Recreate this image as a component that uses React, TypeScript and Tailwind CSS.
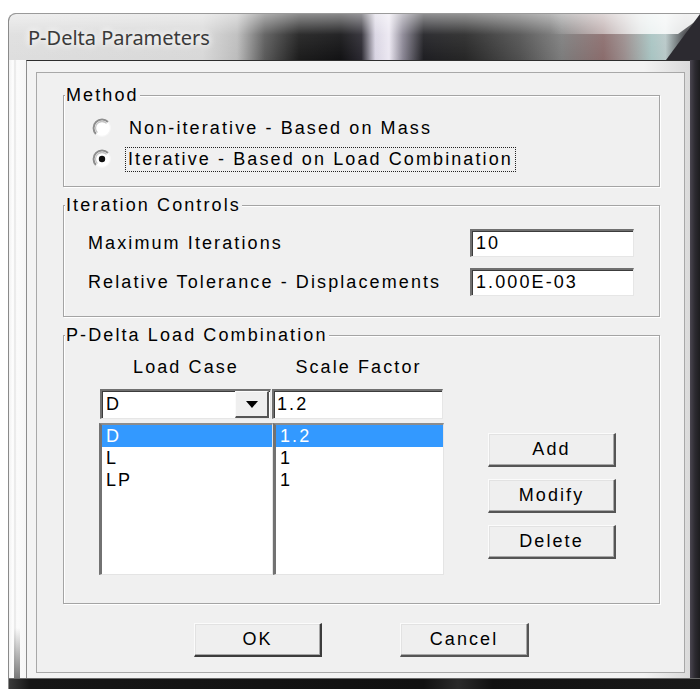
import React from "react";

const ui = "font-['Liberation_Sans',Arial,sans-serif] text-[18px] tracking-[2.1px] text-black";

function Radio({ checked }: { checked?: boolean }) {
  return (
    <svg width="20" height="20" viewBox="0 0 20 20" className="shrink-0">
      <circle cx="10" cy="10" r="8.5" fill="#ffffff" />
      <path d="M3.99 16.01 A8.5 8.5 0 0 1 16.01 3.99" fill="none" stroke="#8e8e8e" strokeWidth="2" />
      <path d="M5.4 14.6 A6.5 6.5 0 0 1 14.6 5.4" fill="none" stroke="#c4c4c4" strokeWidth="1.3" />
      <path d="M16.01 3.99 A8.5 8.5 0 0 1 3.99 16.01" fill="none" stroke="#f6f6f6" strokeWidth="1.2" />
      {checked && <circle cx="10" cy="10" r="3.2" fill="#111111" />}
    </svg>
  );
}

function Field({ value, width }: { value: string; width: string }) {
  return (
    <div
      className={`${width} h-[28px] bg-white border-t-2 border-l-2 border-b border-r border-t-[#707070] border-l-[#707070] border-b-[#e6e6e6] border-r-[#e6e6e6] shadow-[inset_1px_1px_0_#3c3c3c] flex items-center pl-[4px]`}
    >
      {value}
    </div>
  );
}

function Button({ label, width, strong }: { label: string; width: string; strong?: boolean }) {
  return (
    <div
      className={`${width} h-[34px] bg-[#efefef] border-t border-l border-t-[#fbfbfb] border-l-[#fbfbfb] border-b-2 border-r-2 ${
        strong ? "border-b-[#3c3c3c] border-r-[#3c3c3c]" : "border-b-[#555555] border-r-[#555555]"
      } shadow-[inset_-1px_-1px_0_#a8a8a8,inset_1px_1px_0_#e2e2e2] flex items-center justify-center`}
    >
      {label}
    </div>
  );
}

function GroupBox({
  title,
  className,
  children,
}: {
  title: string;
  className: string;
  children: React.ReactNode;
}) {
  return (
    <div className={`relative w-[597px] border border-[#a4a4a4] shadow-[inset_1px_1px_0_#ffffff,1px_1px_0_#ffffff] ${className}`}>
      <span className="absolute left-[1px] -top-[11px] leading-[20px] bg-[#f0f0f0] px-[1px]">{title}</span>
      {children}
    </div>
  );
}

const loadCases = [
  { name: "D", factor: "1.2", selected: true },
  { name: "L", factor: "1", selected: false },
  { name: "LP", factor: "1", selected: false },
];

function ListBox({ field }: { field: "name" | "factor" }) {
  return (
    <div className="h-[152px] bg-white border-l-[3px] border-t-2 border-l-[#727272] border-t-[#8c8c8c] border-r border-b border-r-[#e4e4e4] border-b-[#e4e4e4] overflow-hidden">
      {loadCases.map((row) => (
        <div
          key={row.name}
          className={`h-[22px] leading-[22px] pl-[4px] ${row.selected ? "bg-[#3399ff] text-white" : ""}`}
        >
          {row[field]}
        </div>
      ))}
    </div>
  );
}

export default function App() {
  return (
    <div className="w-[700px] h-[689px] bg-white pl-[8px] pt-[13px] overflow-hidden">
      <div className="w-[692px] h-[676px] flex flex-col rounded-tl-[8px] overflow-hidden border-l border-t border-l-[#8a8a8a] border-t-[#9a9a9a] bg-[#1c1c1e]">
        {/* title bar */}
        <div className="relative h-[46px] shrink-0 flex items-center pl-[19px] pt-[2px] bg-[image:linear-gradient(180deg,rgba(255,255,255,0.5)_0%,rgba(255,255,255,0.08)_45%,rgba(0,0,0,0)_100%),linear-gradient(90deg,#dedede_0%,#d8d8d8_28%,#bcbcbc_33%,#5a5a5a_37%,#1c1c1c_42%,#121214_48%,#2a2830_51%,#d8d4e2_53%,#ece8f2_55%,#8a8694_57%,#1e1e22_60%,#262626_66%,#505050_74%,#7c7c7c_80%,#8a6c6c_86%,#9a8c8c_89%,#a8c4c2_93%,#b8c8c8_95%,#3a3a3e_98%,#202022_100%)]">
          <span className="font-['Noto_Sans',Arial,sans-serif] text-[20px] text-[#3a3a3a] [text-shadow:0_0_6px_#ffffff,0_0_10px_#ffffff]">
            P-Delta Parameters
          </span>
          {/* glossy highlight and shaded corner at the top right of the frame */}
          <svg className="absolute right-0 top-0" width="150" height="46" viewBox="0 0 150 46">
            <defs>
              <linearGradient id="gloss" x1="0" y1="0" x2="1" y2="0">
                <stop offset="0" stopColor="#ffffff" stopOpacity="0" />
                <stop offset="0.6" stopColor="#ffffff" stopOpacity="0.75" />
                <stop offset="1" stopColor="#ffffff" stopOpacity="0.9" />
              </linearGradient>
            </defs>
            <path d="M0 0 H150 V4 L128 20 H0 Z" fill="url(#gloss)" />
            <path d="M150 0 V46 H116 Z" fill="#2c2a30" />
          </svg>
        </div>

        <div className="flex h-[618px] shrink-0">
          {/* left glass edge */}
          <div className="w-[17px] h-full flex bg-[linear-gradient(90deg,#f2f2f2_0%,#ffffff_25%,#e4e4e4_35%,#fbfbfb_45%,#f6f6f6_100%)]">
            <div className="w-[5px]" />
            <div className="w-[6px] h-full flex flex-col">
              <div className="flex-1" />
              <div className="h-[50px] bg-[linear-gradient(180deg,rgba(120,120,120,0)_0%,#7a7a7a_100%)]" />
            </div>
          </div>

          {/* client area */}
          <div className="w-[664px] h-full bg-[linear-gradient(90deg,#f3f3f3_0%,#f3f3f3_93%,#dadada_100%)] border-t border-l border-t-[#2e2e2e] border-l-[#8c8c8c] pt-[11px] pl-[9px] pr-[5px] pb-[5px]">
            <div className={`w-[649px] h-[601px] border border-[#a8a8a8] bg-[#f0f0f0] pl-[26px] ${ui}`}>
              {/* Method */}
              <GroupBox title="Method" className="mt-[22px] pt-[19px] pb-[14px] pl-[28px]">
                <div className="flex flex-col gap-[5px]">
                  <div className="h-[26px] flex items-center gap-[13px]">
                    <Radio />
                    <span className="h-[25px] flex items-center px-[3px] border border-transparent">
                      Non-iterative - Based on Mass
                    </span>
                  </div>
                  <div className="h-[26px] flex items-center gap-[13px]">
                    <Radio checked />
                    <span className="h-[25px] flex items-center px-[2px] border border-dotted border-[#222222]">
                      Iterative - Based on Load Combination
                    </span>
                  </div>
                </div>
              </GroupBox>

              {/* Iteration Controls */}
              <GroupBox title="Iteration Controls" className="mt-[18px] pt-[23px] pb-[20px] pl-[24px] pr-[25px]">
                <div className="flex flex-col gap-[11px]">
                  <div className="flex items-center justify-between">
                    <span>Maximum Iterations</span>
                    <Field value="10" width="w-[164px]" />
                  </div>
                  <div className="flex items-center justify-between">
                    <span>Relative Tolerance - Displacements</span>
                    <Field value="1.000E-03" width="w-[164px]" />
                  </div>
                </div>
              </GroupBox>

              {/* P-Delta Load Combination */}
              <GroupBox title="P-Delta Load Combination" className="mt-[18px] pt-[20px] pb-[28px] pl-[35px]">
                <div className="flex">
                  <div className="w-[345px]">
                    <div className="grid grid-cols-[174px_171px] h-[22px] leading-[22px]">
                      <span className="text-center">Load Case</span>
                      <span className="text-center">Scale Factor</span>
                    </div>
                    <div className="grid grid-cols-[174px_171px] mt-[11px] h-[30px]">
                      <div className="ml-[1px] w-[171px] h-[30px] bg-white border-t-2 border-l-2 border-b border-r border-t-[#707070] border-l-[#707070] border-b-[#e6e6e6] border-r-[#e6e6e6] shadow-[inset_1px_1px_0_#3c3c3c] flex items-center">
                        <span className="flex-1 pl-[4px]">D</span>
                        <div className="w-[34px] h-[27px] mr-[1px] bg-[#efefef] border-t border-l border-t-[#fbfbfb] border-l-[#fbfbfb] border-b-2 border-r-2 border-b-[#555555] border-r-[#555555] flex items-center justify-center">
                          <svg width="12" height="7" viewBox="0 0 12 7">
                            <path d="M0 0 H12 L6 7 Z" fill="#000000" />
                          </svg>
                        </div>
                      </div>
                      <div className="-ml-[1px] w-[171px] h-[30px] bg-white border-t-2 border-l-2 border-b border-r border-t-[#707070] border-l-[#707070] border-b-[#e6e6e6] border-r-[#e6e6e6] shadow-[inset_1px_1px_0_#3c3c3c] flex items-center pl-[3px]">
                        1.2
                      </div>
                    </div>
                    <div className="grid grid-cols-[174px_171px] mt-[4px]">
                      <ListBox field="name" />
                      <ListBox field="factor" />
                    </div>
                  </div>
                  <div className="ml-[44px] mt-[77px] flex flex-col gap-[12px]">
                    <Button label="Add" width="w-[128px]" />
                    <Button label="Modify" width="w-[128px]" />
                    <Button label="Delete" width="w-[128px]" />
                  </div>
                </div>
              </GroupBox>

              {/* dialog buttons */}
              <div className="mt-[19px] w-[597px] flex justify-center gap-[78px]">
                <Button label="OK" width="w-[128px]" strong />
                <Button label="Cancel" width="w-[129px]" />
              </div>
            </div>
          </div>

          {/* right dark edge */}
          <div className="w-[10px] h-full bg-[linear-gradient(90deg,#4a4650_0%,#2c2a30_50%,#1c1c1e_100%)]" />
        </div>

        {/* bottom edge */}
        <div className="h-[11px] shrink-0 border-t border-t-[#6a6a6a] bg-[linear-gradient(90deg,#3a3a3a_0%,#161616_3%,#111111_60%,#2a2a2a_65%,#111111_70%,#1a1a1a_100%)]" />
      </div>
    </div>
  );
}
